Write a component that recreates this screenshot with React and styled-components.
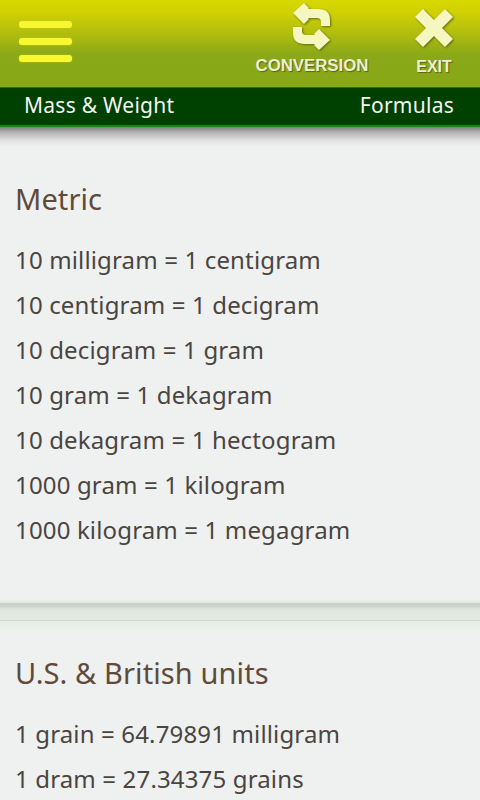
import React from 'react';
import styled, { createGlobalStyle } from 'styled-components';

const Global = createGlobalStyle`
  html, body { margin: 0; padding: 0; background: #eff0f0; }
  body { font-family: "Noto Sans", "Open Sans", sans-serif; }
`;

const Screen = styled.div`
  width: 480px;
  height: 800px;
  overflow: hidden;
  background: #eff0f0;
`;

const TopBar = styled.header`
  height: 87px;
  display: flex;
  align-items: flex-start;
  background: linear-gradient(180deg, #d8d800 0%, #d0d004 15%, #a8b810 45%, #8aa818 62%, #88a818 100%);
`;

const MenuButton = styled.button`
  width: 53px;
  height: 41px;
  margin: 21px 0 0 19px;
  padding: 0;
  border: 0;
  background: none;
  display: flex;
  flex-direction: column;
  justify-content: space-between;
`;

const MenuLine = styled.span`
  display: block;
  height: 7px;
  border-radius: 3px;
  background: #f8f830;
  box-shadow: 0 0 2px #c8c820;
`;

const Actions = styled.div`
  margin-left: auto;
  display: flex;
`;

const Action = styled.div`
  width: ${(p) => p.$width}px;
  margin-right: ${(p) => p.$right}px;
  padding-top: ${(p) => p.$top}px;
  display: flex;
  flex-direction: column;
  align-items: center;
`;

const ActionLabel = styled.span`
  margin-top: ${(p) => p.$gap}px;
  font-family: "Liberation Sans", Arial, sans-serif;
  font-size: ${(p) => p.$size}px;
  line-height: 18px;
  font-weight: 700;
  color: #eeeed4;
  text-shadow: 1px 1px 1px #56660e;
  white-space: nowrap;
`;

const NavBar = styled.nav`
  height: 40px;
  box-sizing: border-box;
  padding: 0 26px 3px 24px;
  display: flex;
  justify-content: space-between;
  align-items: center;
  background: #004000;
  border-top: 1px solid #2a6a08;
  border-bottom: 2px solid #128a10;
  color: #f4f4f4;
  font-size: 21px;
  letter-spacing: 0.25px;
`;

const NavShadow = styled.div`
  height: 20px;
  background: linear-gradient(180deg, #7c7c7c 0%, #b0b0b0 25%, #e4e4e4 70%, #eff0f0 100%);
`;

const Section = styled.section`
  padding: ${(p) => p.$top}px 15px 0;
`;

const Title = styled.h2`
  margin: 0 0 12px;
  font-size: 29px;
  line-height: 52px;
  font-weight: 400;
  letter-spacing: 0.1px;
  color: #604a3a;
`;

const Row = styled.p`
  margin: 0;
  font-size: 24px;
  line-height: 45px;
  letter-spacing: 0.15px;
  color: #4a4540;
  white-space: nowrap;
`;

const Divider = styled.div`
  height: 30px;
  margin-top: 48px;
  background: linear-gradient(
    180deg,
    #eaefea 0%,
    #e4e9e4 8%,
    #c8cec8 12%,
    #cfd5cf 22%,
    #dfe5df 30%,
    #e4ebe2 60%,
    #e2e8e0 66%,
    #d0dad0 67%,
    #d0dad0 69%,
    #e6efe6 71%,
    #e8f0e8 90%,
    #eff0f0 100%
  );
`;

const metric = [
  '10 milligram = 1 centigram',
  '10 centigram = 1 decigram',
  '10 decigram = 1 gram',
  '10 gram = 1 dekagram',
  '10 dekagram = 1 hectogram',
  '1000 gram = 1 kilogram',
  '1000 kilogram = 1 megagram',
];

const british = ['1 grain = 64.79891 milligram', '1 dram = 27.34375 grains'];

const arrow = 'M10 13 L21 3 L26 8 L25 9 L35 9 Q47 9 47 20 L47 26 L38 26 L38 22 Q38 18 34 18 L25 18 L26 19 L21 24 Z';

const ConvertIcon = () => (
  <svg width="42" height="52" viewBox="8 1 42 52" style={{ filter: 'drop-shadow(1px 1px 1px #5c6c10)' }}>
    <path fill="#f6f6c0" d={arrow} />
    <path fill="#f6f6c0" d={arrow} transform="rotate(180 28.5 26.5)" />
  </svg>
);

const ExitIcon = () => (
  <svg width="40" height="40" viewBox="0 0 40 40" style={{ filter: 'drop-shadow(1px 1px 1px #5c6c10)' }}>
    <path
      fill="#f6f6c0"
      d="M9 1 L20 12 L31 1 L39 9 L28 20 L39 31 L31 39 L20 28 L9 39 L1 31 L12 20 L1 9 Z"
    />
  </svg>
);

export default function App() {
  return (
    <Screen>
      <Global />
      <TopBar>
        <MenuButton aria-label="Menu">
          <MenuLine />
          <MenuLine />
          <MenuLine />
        </MenuButton>
        <Actions>
          <Action $width={116} $right={39} $top={1}>
            <ConvertIcon />
            <ActionLabel $gap={4} $size={16.8}>CONVERSION</ActionLabel>
          </Action>
          <Action $width={50} $right={21} $top={8}>
            <ExitIcon />
            <ActionLabel $gap={10} $size={16}>EXIT</ActionLabel>
          </Action>
        </Actions>
      </TopBar>
      <NavBar>
        <span>Mass &amp; Weight</span>
        <span>Formulas</span>
      </NavBar>
      <NavShadow />
      <Section $top={26}>
        <Title>Metric</Title>
        {metric.map((row) => (
          <Row key={row}>{row}</Row>
        ))}
      </Section>
      <Divider />
      <Section $top={17}>
        <Title>U.S. &amp; British units</Title>
        {british.map((row) => (
          <Row key={row}>{row}</Row>
        ))}
      </Section>
    </Screen>
  );
}
